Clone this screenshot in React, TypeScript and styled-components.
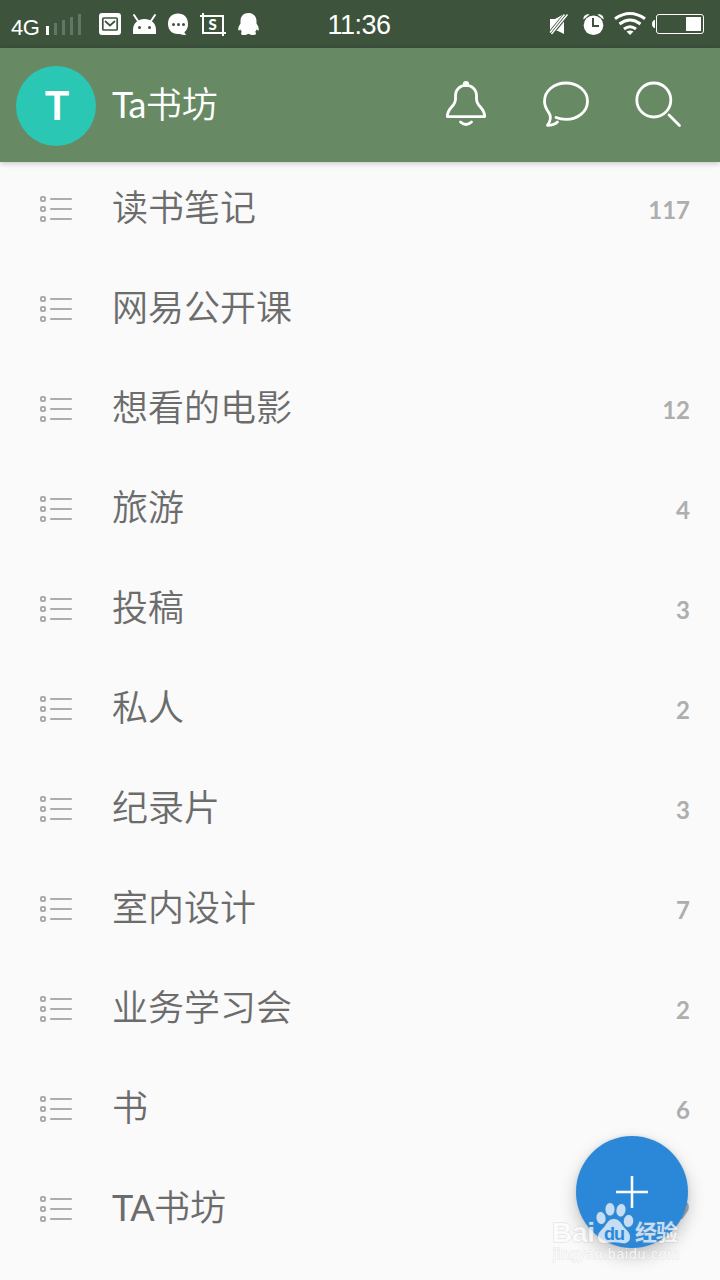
import React from "react";
import styled, { createGlobalStyle } from "styled-components";

const Global = createGlobalStyle`
  * { box-sizing: border-box; }
  html, body { margin: 0; padding: 0; background: #fafafa; }
  body { font-family: Lato, "Noto Sans CJK SC", sans-serif; overflow: hidden; }
`;

const Screen = styled.main`
  position: relative;
  display: flex;
  flex-direction: column;
  width: 720px;
  height: 1280px;
  overflow: hidden;
  background: #fafafa;
`;

const StatusBar = styled.div`
  display: flex;
  flex: none;
  height: 48px;
  background: #3d533c;
  color: #fff;
  font-family: "Liberation Sans", sans-serif;
`;

const StatusLeft = styled.div`
  display: flex;
  width: 327.500px;
  padding-left: 11px;
`;

const Network = styled.span`
  width: 34px;
  padding-top: 15px;
  font-size: 22px;
  line-height: 26px;
  letter-spacing: -0.5px;
`;

const Clock = styled.span`
  width: 220.500px;
  font-size: 27px;
  line-height: 50px;
  letter-spacing: -0.5px;
`;

const Header = styled.header`
  position: relative;
  display: flex;
  flex: none;
  align-items: center;
  height: 114px;
  padding: 0 32px 0 16px;
  background: #678a64;
  box-shadow: 0 1px 6px rgba(0, 0, 0, 0.24);
`;

const Avatar = styled.div`
  width: 80px;
  height: 80px;
  margin-top: 2px;
  padding-left: 2px;
  border-radius: 50%;
  background: #2ac7b5;
  color: #fff;
  font-size: 41px;
  font-weight: 700;
  line-height: 78px;
  text-align: center;
`;

const Title = styled.h1`
  flex: 1;
  margin: 0 0 4px 16px;
  color: #fff;
  font-size: 36px;
  font-weight: 400;
  line-height: 54px;
`;

const Latin = styled.span`
  letter-spacing: -0.6px;
`;

const Cjk = styled.span`
  font-family: "Noto Sans CJK SC", sans-serif;
  font-weight: 350;
`;

const List = styled.ul`
  display: flex;
  flex-direction: column;
  gap: 6px;
  margin: 0;
  padding: 0;
  list-style: none;
`;

const Row = styled.li`
  display: flex;
  align-items: center;
  height: 94px;
  padding: 0 30px 0 40px;
`;

const Name = styled.span`
  flex: 1;
  margin: 0 0 6px 40px;
  color: #6c6c6c;
  font-size: 36px;
  line-height: 54px;
`;

const Count = styled.span`
  color: #aeaeae;
  font-size: 24px;
  font-weight: 700;
  line-height: 30px;
  padding-top: 2px;
`;

const Fab = styled.button`
  position: absolute;
  left: 576px;
  top: 1136px;
  display: flex;
  align-items: center;
  justify-content: center;
  width: 112px;
  height: 112px;
  padding: 0;
  border: 0;
  border-radius: 50%;
  background: #2b88d9;
  box-shadow: 0 8px 18px rgba(0, 0, 0, 0.22), 0 0 4px rgba(0, 0, 0, 0.1);
`;

const Watermark = styled.svg`
  position: absolute;
  left: 548px;
  top: 1196px;
`;

const rows: { name: string; latin?: string; count?: number }[] = [
  { name: "读书笔记", count: 117 },
  { name: "网易公开课" },
  { name: "想看的电影", count: 12 },
  { name: "旅游", count: 4 },
  { name: "投稿", count: 3 },
  { name: "私人", count: 2 },
  { name: "纪录片", count: 3 },
  { name: "室内设计", count: 7 },
  { name: "业务学习会", count: 2 },
  { name: "书", count: 6 },
  { name: "书坊", latin: "TA", count: 9 },
];

const ListIcon = () => (
  <svg width="32" height="26" fill="none" stroke="#acacac" strokeWidth="2">
    {[3, 13, 23].map((y) => (
      <g key={y}>
        <rect x="1" y={y - 2} width="4" height="4" rx="1" />
        <path d={`M11 ${y}h20`} strokeLinecap="round" />
      </g>
    ))}
  </svg>
);

const LeftIcons = () => (
  <svg width="240" height="48" viewBox="45 0 240 48" fill="#fff">
    <path d="M46 26h3v9h-3z" />
    <path d="M54 23h3v12h-3zM62 20h3v15h-3zM70 17h3v18h-3zM78 14h3v21h-3z" opacity=".2" />
    <rect x="99" y="13" width="22" height="22" rx="3" />
    <rect x="102.8" y="18" width="14.4" height="12" rx="1" fill="none" stroke="#3d533c" strokeWidth="1.7" />
    <path d="M105 21l5 4.500 5-4.500" fill="none" stroke="#3d533c" strokeWidth="1.7" />
    <path d="M133 34v-4c0-7 5-11 11.500-11s11.500 4 11.500 11v4z" />
    <path d="M134 15l4 6M155 15l-4 6" stroke="#fff" strokeWidth="2" strokeLinecap="round" />
    <circle cx="139.500" cy="27.500" r="1.500" fill="#3d533c" />
    <circle cx="149.500" cy="27.500" r="1.500" fill="#3d533c" />
    <path d="M178 13.500c6 0 10 4 10 10.500 0 4-1.500 6.500-3.500 8 0 1.500 1 2.200 2 3-3 0-5-.6-6.500-1.100C173 35 168 30.500 168 24c0-6.500 4-10.500 10-10.500z" />
    <g fill="#3d533c"><circle cx="173.500" cy="24.500" r="1.500" /><circle cx="178.500" cy="24.500" r="1.500" /><circle cx="183.500" cy="24.500" r="1.500" /></g>
    <path d="M200 16h23v20M203 13v20h23" fill="none" stroke="#fff" strokeWidth="2" />
    <text x="212.700" y="30" fontFamily="Lato" fontWeight="900" fontSize="15" textAnchor="middle">S</text>
    <path d="M248.500 13c5 0 8 3.500 8 8v2.500c1.500 2 2.500 4.500 2.200 6.500-.3 1-1.200.6-2-.8-.4 1.300-1 2.200-1.700 2.900 1.600.7 1.600 2.900-1.500 2.900-2 0-3.500-.3-5-1.200-1.500.9-3 1.200-5 1.200-3.100 0-3.100-2.200-1.500-2.900-.7-.7-1.300-1.600-1.700-2.900-.8 1.400-1.700 1.800-2 .8-.3-2 .7-4.500 2.200-6.500V21c0-4.500 3-8 8-8z" />
  </svg>
);

const RightIcons = () => (
  <svg width="172" height="48" viewBox="548 0 172 48" fill="#fff">
    <path d="M550 19h5l9-5v20l-6-3h-8z" />
    <path d="M567.500 13l-18 22" stroke="#3d533c" strokeWidth="5.500" />
    <path d="M564.500 14.500l-14.500 18M567.500 14.500l-16 19.500" stroke="#fff" strokeWidth="1.400" />
    <circle cx="593.500" cy="25.200" r="9.800" />
    <path d="M583.500 19.500c-.8-3.300 3-6.300 6-5zM603.500 19.500c.8-3.300-3-6.300-6-5z" />
    <path d="M593 18v8h6" fill="none" stroke="#3d533c" strokeWidth="2" />
    <g fill="none" stroke="#fff" strokeWidth="3">
      <path d="M615 18.800q15-10.500 30 0" />
      <path d="M619.500 24q10.500-8 21 0" />
      <path d="M624 29q6-4.500 12 0" />
    </g>
    <path d="M630 35l-3.500-3.500q3.500-2 7 0z" />
    <path d="M655 20v8c-4 0-4-8 0-8z" />
    <rect x="656.500" y="14.500" width="47" height="19" rx="2.500" fill="none" stroke="#fff" />
    <rect x="686" y="17" width="15" height="14" />
  </svg>
);

const HeaderIcons = () => (
  <svg width="248" height="60" viewBox="440 75 248 60" fill="none" stroke="#fff" strokeWidth="2.800" strokeLinecap="round" strokeLinejoin="round">
    <path d="M466 85.400c-6 0-10.500 4-10.500 10v3.500c0 8-8.200 8.500-8.200 17.700h37.400c0-9.200-8.200-9.700-8.200-17.700v-3.500c0-6-4.500-10-10.500-10z" />
    <circle cx="466" cy="84" r="1.700" fill="#fff" />
    <path d="M460.500 122q5.500 5 11 0" />
    <path d="M556 117.500c3 1.200 6 1.900 10 1.900 12 0 21.500-8 21.500-18.200S578 83 566 83s-21.500 8-21.500 18.300c0 5.500 2 8.300 4.300 11.300 2.700 3.800 2 8-1.300 12.800 4.500 0 7.500-1 10-3.400" />
    <circle cx="653.800" cy="100" r="17" />
    <path d="M669 115l10.500 10.500" />
  </svg>
);

const BaiduMark = () => (
  <Watermark width="140" height="70">
    <g fill="#fff" fillOpacity=".72" stroke="#999" strokeOpacity=".2" strokeWidth="1.500" paintOrder="stroke">
      <text x="4" y="46" fontFamily="Liberation Sans" fontWeight="700" fontSize="28" textLength="43">Bai</text>
      <ellipse cx="53" cy="22" rx="4.500" ry="6" transform="rotate(-10 53 22)" />
      <ellipse cx="62" cy="13.200" rx="4.500" ry="6.300" />
      <ellipse cx="73" cy="14.200" rx="4.500" ry="6.300" transform="rotate(10 73 14)" />
      <ellipse cx="80.500" cy="25" rx="4.700" ry="6" transform="rotate(5 80 25)" />
      <path d="M66 23c5 0 7 4 9 7 3 4 7 6 7 11s-4 7-8 6c-5-1-11-1-16 0-5 1-8-2-8-6 0-5 4-7 7-11s4-7 9-7z" />
      <text x="87" y="44" fontFamily="Noto Sans CJK SC" fontWeight="700" fontSize="22" textLength="43">经验</text>
    </g>
    <text x="5" y="63" fill="#fff" fillOpacity=".85" stroke="#999" strokeOpacity=".16" strokeWidth="1.500" paintOrder="stroke" fontFamily="Liberation Sans" fontSize="14" textLength="126">jingyan.baidu.com</text>
    <text x="56" y="44" fill="#2b88d9" fontFamily="Liberation Sans" fontWeight="700" fontSize="18" textLength="21">du</text>
  </Watermark>
);

export default function App() {
  return (
    <Screen>
      <Global />
      <StatusBar>
        <StatusLeft>
          <Network>4G</Network>
          <LeftIcons />
        </StatusLeft>
        <Clock>11:36</Clock>
        <RightIcons />
      </StatusBar>
      <Header>
        <Avatar>T</Avatar>
        <Title><Latin>Ta</Latin><Cjk>书坊</Cjk></Title>
        <HeaderIcons />
      </Header>
      <List>
        {rows.map((r) => (
          <Row key={(r.latin ?? "") + r.name}>
            <ListIcon />
            <Name>{r.latin && <Latin>{r.latin}</Latin>}<Cjk>{r.name}</Cjk></Name>
            {r.count !== undefined && <Count>{r.count}</Count>}
          </Row>
        ))}
      </List>
      <Fab aria-label="+">
        <svg width="32" height="32" stroke="#fff" strokeWidth="2.500">
          <path d="M16 0v32M0 16h32" />
        </svg>
      </Fab>
      <BaiduMark />
    </Screen>
  );
}
